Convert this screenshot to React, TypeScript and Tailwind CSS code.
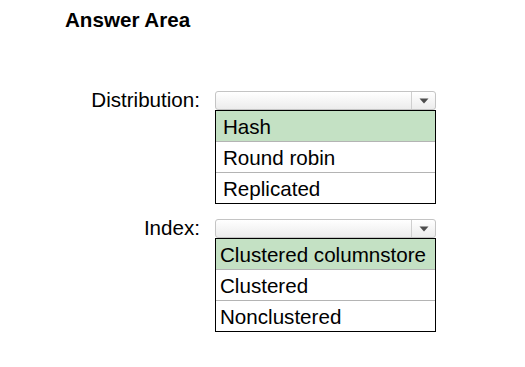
import React from 'react';

type Field = {
  label: string;
  options: string[];
  padText: string;
};

const fields: Field[] = [
  { label: 'Distribution:', options: ['Hash', 'Round robin', 'Replicated'], padText: 'pl-[7px]' },
  { label: 'Index:', options: ['Clustered columnstore', 'Clustered', 'Nonclustered'], padText: 'pl-[4px]' },
];

const DropdownField: React.FC<{ field: Field }> = ({ field }) => (
  <div className="flex items-start">
    <div className="w-[201px] pr-[1px] text-right text-[20.6px] leading-[18px] text-black">{field.label}</div>
    <div className="ml-[14px] flex w-[221px] flex-col">
      {/* closed select */}
      <div className="flex h-[19px] items-stretch rounded-[3px] border border-[#c4c4c4] bg-gradient-to-b from-white to-[#ececec]">
        <div className="flex-1" />
        <div className="flex w-[24px] items-center justify-center border-l border-[#cfcfcf]">
          <svg width="10" height="6" viewBox="0 0 10 6">
            <path d="M0.5 0.5 L9.5 0.5 L5 5.5 Z" fill="#4d4d4d" />
          </svg>
        </div>
      </div>
      {/* answer list */}
      <div className="flex flex-col border border-black">
        {field.options.map((opt, i) => (
          <div
            key={opt}
            className={`flex items-center ${field.padText} text-[20.6px] leading-[23px] text-black ${
              i === 0 ? 'h-[30px] bg-[#c4e1c4]' : 'h-[31px] border-t border-[#b4b4b4] bg-white'
            }`}
          >
            {opt}
          </div>
        ))}
      </div>
    </div>
  </div>
);

const App: React.FC = () => {
  return (
    <div className="h-[367px] w-[525px] bg-white pt-[8px] font-['Liberation_Sans',Arial,sans-serif]">
      <h1 className="ml-[65px] text-[20.6px] font-bold leading-[23px] text-black">Answer Area</h1>
      <div className="mt-[60px] flex flex-col gap-[15px]">
        {fields.map((f) => (
          <DropdownField key={f.label} field={f} />
        ))}
      </div>
    </div>
  );
};

export default App;
